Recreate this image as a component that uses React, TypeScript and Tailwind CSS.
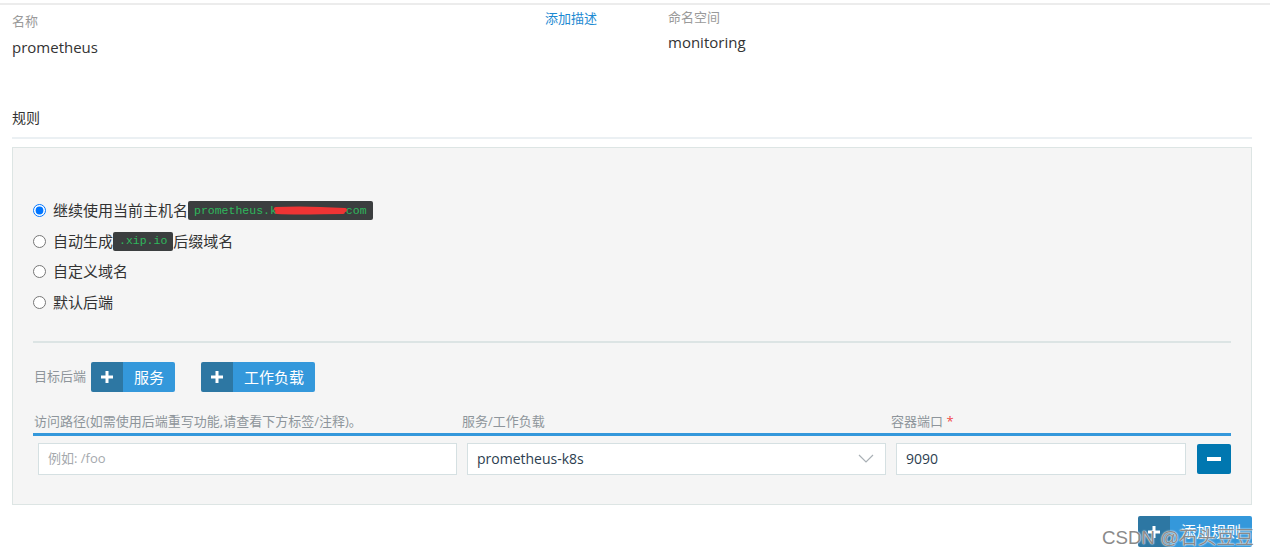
import React from "react";

const cjk = { fontFamily: '"Open Sans", "Noto Sans CJK SC", sans-serif' };

function Radio({ checked }: { checked?: boolean }) {
  return (
    <input
      type="radio"
      name="r"
      checked={!!checked}
      readOnly
      className="m-0 w-[13px] h-[13px] mr-[7px]"
    />
  );
}

function Chip({ children }: { children: React.ReactNode }) {
  return (
    <span
      className="relative inline-flex items-center h-[19px] px-[6px] rounded-[2px] bg-[#3b3e3f] text-[#2fb75c] text-[11.5px]"
      style={{ fontFamily: '"Liberation Mono", "DejaVu Sans Mono", monospace' }}
    >
      {children}
    </span>
  );
}

function AddButton({ label, className = "" }: { label: string; className?: string }) {
  return (
    <div className={"flex h-[30px] rounded-[2px] overflow-hidden " + className}>
      <div className="w-[32px] bg-[#2d77a3] flex items-center justify-center">
        <svg width="12" height="12" viewBox="0 0 12 12">
          <rect x="4.5" y="0" width="3" height="12" fill="white" />
          <rect x="0" y="4.5" width="12" height="3" fill="white" />
        </svg>
      </div>
      <div className="bg-[#3498db] text-white text-[15px] flex items-center px-[11px]">{label}</div>
    </div>
  );
}

export default function App() {
  return (
    <div className="w-[1270px] h-[557px] bg-white relative overflow-hidden text-[#333]" style={cjk}>
      <div className="h-[3px]" />
      <div className="border-t-2 border-[#ececec]" />
      {/* header */}
      <div className="flex pl-[12px] pt-[7px] h-[97px]">
        <div className="w-[533px]">
          <div className="text-[13px] text-[#9a9a9a] leading-[18px]">名称</div>
          <div className="text-[15px] text-[#333] mt-[7px] leading-[20px]">prometheus</div>
        </div>
        <div className="w-[123px]">
          <div className="text-[13px] text-[#1d8ad2] leading-[18px] -mt-[3px]">添加描述</div>
        </div>
        <div>
          <div className="text-[13px] text-[#9a9a9a] leading-[18px] -mt-[4px]">命名空间</div>
          <div className="text-[15px] text-[#333] mt-[6px] leading-[20px]">monitoring</div>
        </div>
      </div>
      {/* rules title */}
      <div className="ml-[12px] w-[1240px]">
        <div className="text-[14px] leading-[20px] h-[35px] pt-[6px]">规则</div>
        <div className="h-[2px] bg-[#ebf0f3]" />
        <div className="h-[8px]" />
        {/* panel */}
        <div className="h-[358px] bg-[#f5f5f5] border border-[#dde5e4] px-[20px] pt-[47px]">
          <div className="flex flex-col text-[15px]">
            <div className="flex items-center h-[30.7px]">
              <Radio checked />
              <span>继续使用当前主机名</span>
              <Chip>
                prometheus.k8s.xxxxxx.com
                <svg className="absolute left-[85px] top-[4px]" width="75" height="12" viewBox="0 0 75 12">
                  <path d="M3 4 C20 3 40 3 72 5 M4 7 C25 8 50 7 70 7" stroke="#ef3434" strokeWidth="4" fill="none" strokeLinecap="round" />
                </svg>
              </Chip>
            </div>
            <div className="flex items-center h-[30.7px]">
              <Radio />
              <span>自动生成</span>
              <Chip>.xip.io</Chip>
              <span>后缀域名</span>
            </div>
            <div className="flex items-center h-[30.7px]">
              <Radio />
              <span>自定义域名</span>
            </div>
            <div className="flex items-center h-[30.7px]">
              <Radio />
              <span>默认后端</span>
            </div>
          </div>
          <div className="mt-[23px] h-[2px] bg-[#dce4e4]" />
          <div className="flex items-center mt-[19px]">
            <span className="text-[13px] text-[#8e959b] ml-[1px] mr-[5px]">目标后端</span>
            <AddButton label="服务" />
            <AddButton label="工作负载" className="ml-[26px]" />
          </div>
          <div className="flex mt-[20px] text-[13px] text-[#8e959b] leading-[18px]">
            <div className="w-[429px] pl-[1px]">访问路径(如需使用后端重写功能,请查看下方标签/注释)。</div>
            <div className="w-[429px]">服务/工作负载</div>
            <div>
              容器端口 <span className="text-[#f04848]">*</span>
            </div>
          </div>
          <div className="mt-[3px] h-[3px] bg-[#3498db]" />
          <div className="flex items-center mt-[7px]">
            <div className="w-[429px] pl-[5px]">
              <div className="h-[32px] w-[419px] bg-white border border-[#d5e0e2] flex items-center px-[9px] text-[13px] text-[#a5a9ad]">
                例如: /foo
              </div>
            </div>
            <div className="w-[429px] pl-[5px]">
              <div className="h-[32px] w-[419px] bg-white border border-[#d5e0e2] flex items-center justify-between pl-[9px] pr-[11px] text-[14px] text-[#2c3e50]">
                <span>prometheus-k8s</span>
                <svg width="16" height="9" viewBox="0 0 16 9">
                  <polyline points="1,1 8,8 15,1" fill="none" stroke="#a9b0b5" strokeWidth="1.2" />
                </svg>
              </div>
            </div>
            <div className="pl-[5px]">
              <div className="h-[32px] w-[290px] bg-white border border-[#d5e0e2] flex items-center px-[9px] text-[14px] text-[#2c3e50]">
                9090
              </div>
            </div>
            <div className="ml-[11px] w-[34px] h-[30px] bg-[#0077b0] rounded-[2px] flex items-center justify-center">
              <div className="w-[14px] h-[4px] bg-white" />
            </div>
          </div>
        </div>
        <div className="flex justify-end mt-[11px]">
          <AddButton label="添加规则" className="h-[31px]" />
        </div>
      </div>
      {/* watermark */}
      <div
        className="absolute left-[1102px] top-[526px] text-[18.7px] leading-[24px] text-[#8a8a8a]"
        style={{
          fontFamily: '"Liberation Sans", "Noto Sans CJK SC", sans-serif',
          textShadow: "0 0 2px #fff, 0 0 1px #fff",
        }}
      >
        CSDN @石头豆豆
      </div>
    </div>
  );
}
